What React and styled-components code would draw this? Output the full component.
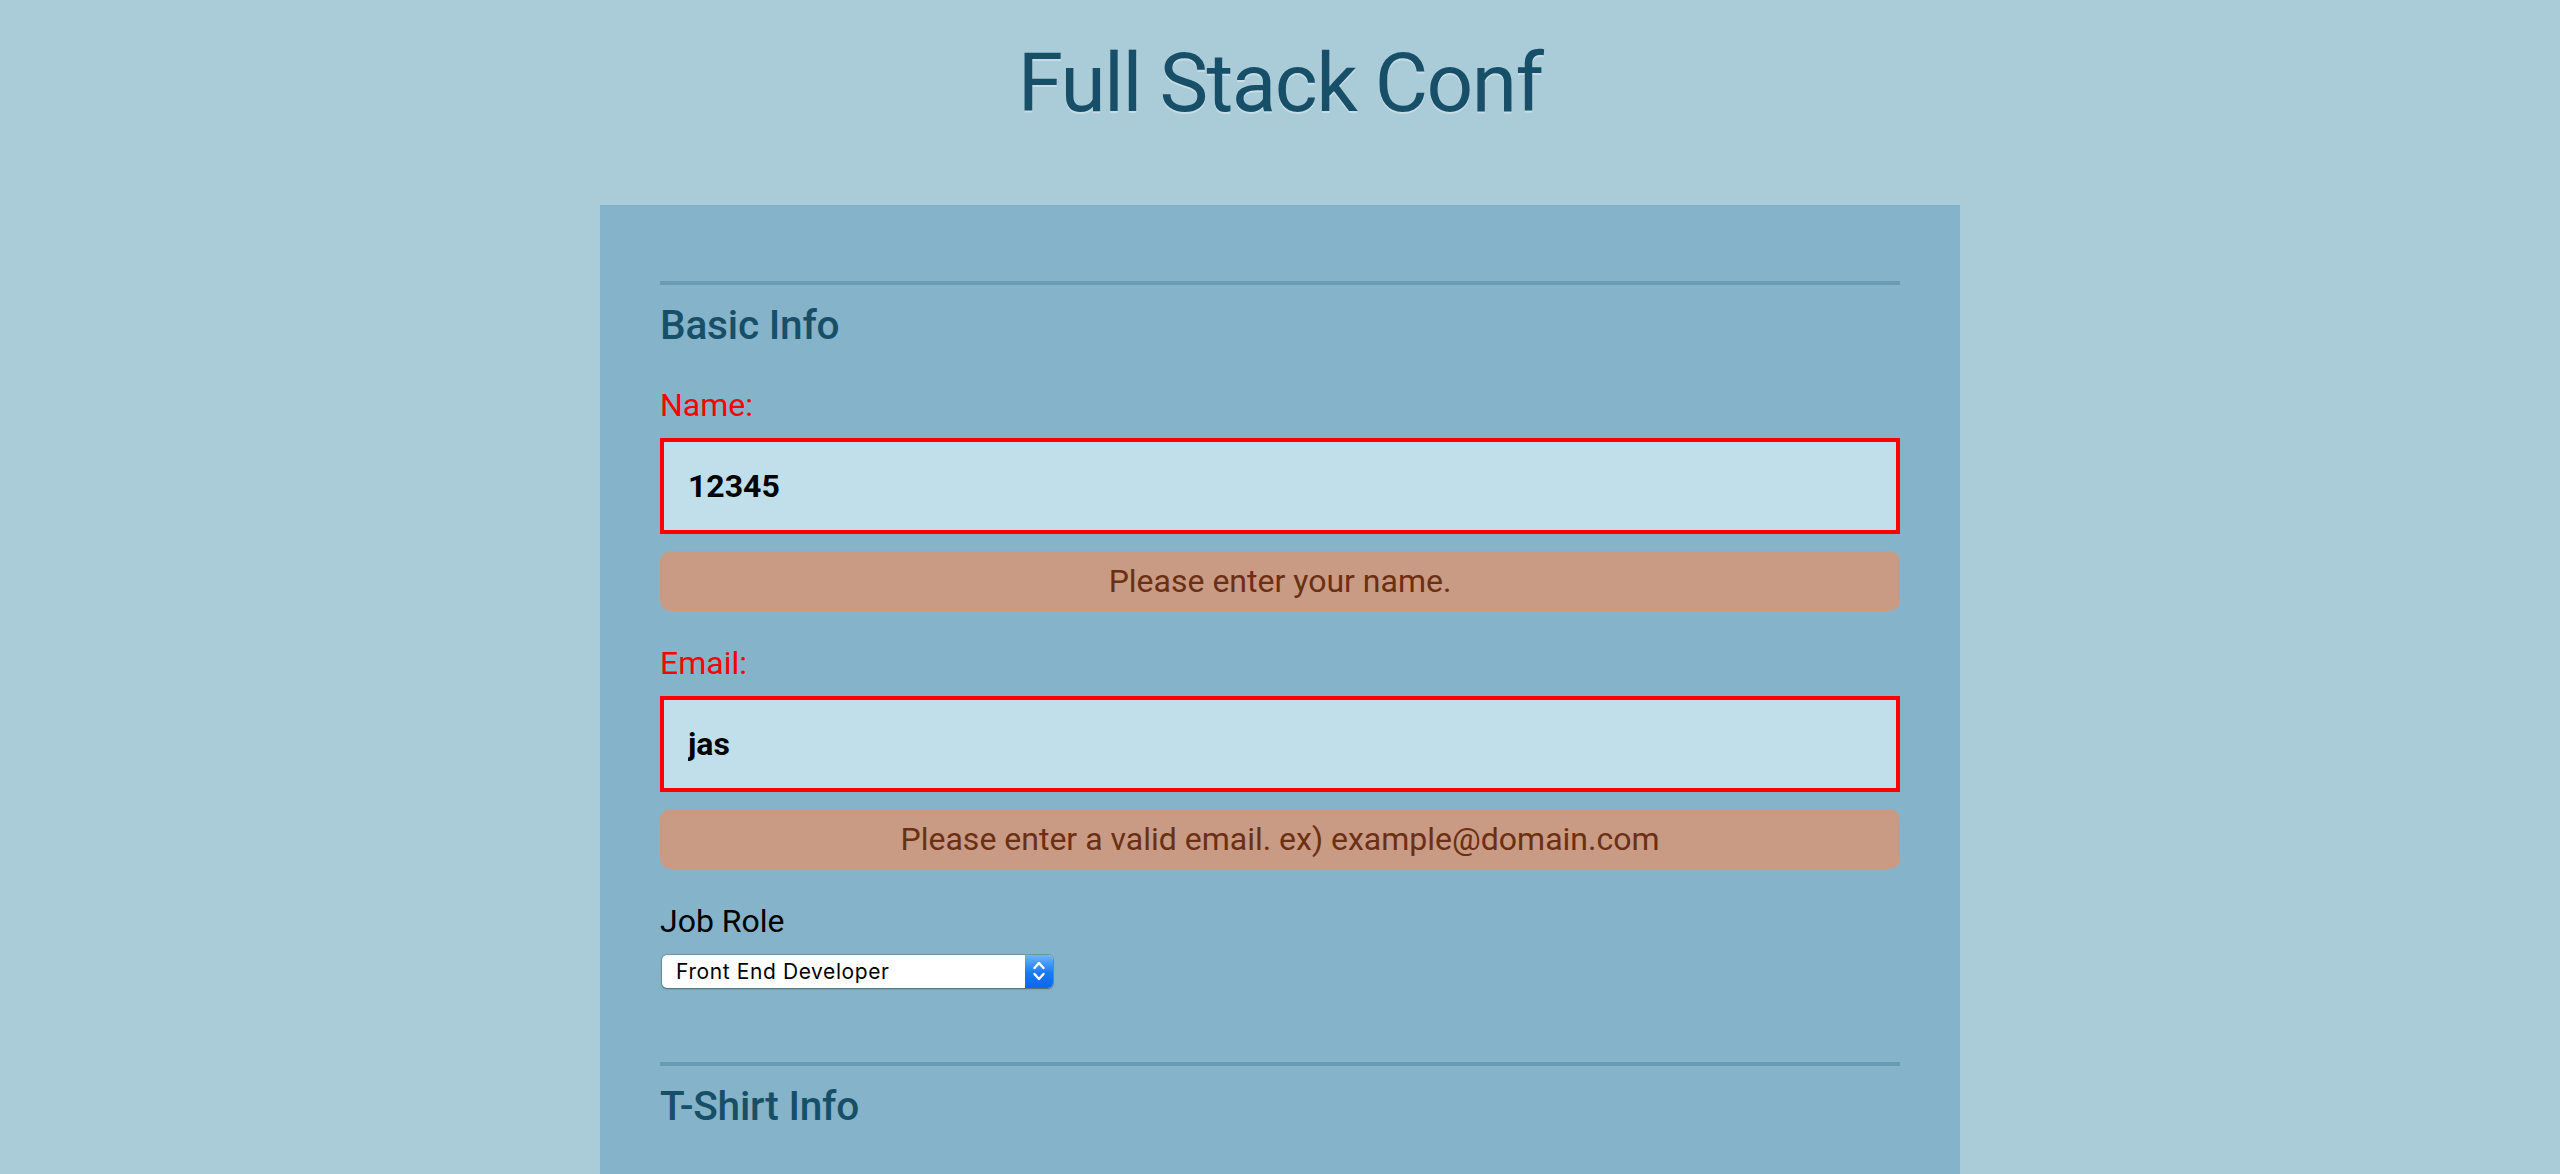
import React from 'react';
import styled, { createGlobalStyle } from 'styled-components';

const GlobalStyle = createGlobalStyle`
  html, body { margin: 0; padding: 0; overflow: hidden; }
  body {
    background: #aacbd8;
    font-family: Roboto, "Noto Sans", "Liberation Sans", sans-serif;
  }
  *, *::before, *::after { box-sizing: border-box; }
`;

const Header = styled.header`
  padding-top: 42px;
  margin-bottom: 80px;
  text-align: center;
`;

const Title = styled.h1`
  margin: 0;
  font-size: 82px;
  line-height: 83px;
  font-weight: 400;
  letter-spacing: -1.6px;
  color: #184f68;
  text-shadow: 0 2px 0 rgba(255, 255, 255, 0.35);
`;

const Form = styled.form`
  width: 1360px;
  margin: 0 auto;
  background: #85b4ca;
  padding: 76px 60px 240px;
  display: flex;
  flex-direction: column;
  gap: 74px;
`;

const Fieldset = styled.fieldset`
  border: 0;
  border-top: 4px solid #689cb4;
  margin: 0;
  padding: 20px 0 0;
  min-width: 0;
  display: flex;
  flex-direction: column;
`;

const Legend = styled.h2`
  margin: 0 0 43px;
  font-size: 40.6px;
  line-height: 1;
  font-weight: 500;
  letter-spacing: -0.2px;
  color: #184f68;
`;

const Field = styled.div`
  display: flex;
  flex-direction: column;
  align-items: flex-start;
  margin-bottom: ${p => (p.$last ? 0 : 36)}px;
`;

const Label = styled.label`
  display: block;
  font-size: 32px;
  line-height: 1;
  font-weight: 400;
  color: ${p => (p.$error ? '#ff0000' : '#000000')};
  margin-bottom: ${p => p.$gap ?? 17}px;
`;

const TextInput = styled.input`
  display: block;
  width: 100%;
  height: 96px;
  margin: 0 0 17px;
  padding: 0 24px;
  border: 4px solid ${p => (p.$error ? '#ff0000' : '#c1dfea')};
  background: #c1dfea;
  font-family: Roboto, "Noto Sans", sans-serif;
  font-size: 32px;
  font-weight: 700;
  color: #000;
  outline: none;
`;

const ErrorMsg = styled.div`
  width: 100%;
  height: 60px;
  border-radius: 10px;
  background: #c99b84;
  color: #6b2f13;
  font-size: 32px;
  line-height: 60px;
  text-align: center;
`;

const SelectWrap = styled.div`
  position: relative;
  width: 391px;
  height: 33px;
  margin-left: 2px;
`;

const NativeSelect = styled.select`
  appearance: none;
  -webkit-appearance: none;
  width: 100%;
  height: 100%;
  border: 0;
  border-radius: 5px;
  background: #ffffff;
  padding: 0 36px 0 14px;
  font-family: Inter, "Liberation Sans", sans-serif;
  font-size: 21px;
  letter-spacing: 0.6px;
  color: #000;
  box-shadow: 0 0 0 1px rgba(0, 0, 0, 0.16), 0 1px 2px rgba(0, 0, 0, 0.3);
  outline: none;
`;

const Stepper = styled.span`
  position: absolute;
  top: 0;
  right: 0;
  width: 28px;
  height: 33px;
  border-radius: 0 5px 5px 0;
  background: linear-gradient(#6db4fb, #1a78f5 55%, #0d66ee);
  display: flex;
  align-items: center;
  justify-content: center;
  pointer-events: none;
`;

const ShirtRow = styled.div`
  display: grid;
  grid-template-columns: 395px 1fr;
`;

const Chevrons = () => (
  <svg width="14" height="24" viewBox="0 0 14 24" fill="none" stroke="#fff" strokeWidth="2.4" strokeLinecap="round" strokeLinejoin="round">
    <polyline points="2.5,9 7,4 11.5,9" />
    <polyline points="2.5,15 7,20 11.5,15" />
  </svg>
);

const Select = ({ options, value }) => (
  <SelectWrap>
    <NativeSelect defaultValue={value}>
      {options.map(o => (
        <option key={o} value={o}>{o}</option>
      ))}
    </NativeSelect>
    <Stepper><Chevrons /></Stepper>
  </SelectWrap>
);

export default function App() {
  return (
    <>
      <GlobalStyle />
      <Header>
        <Title>Full Stack Conf</Title>
      </Header>
      <Form onSubmit={e => e.preventDefault()}>
        <Fieldset>
          <Legend>Basic Info</Legend>
          <Field>
            <Label htmlFor="name" $error>Name:</Label>
            <TextInput id="name" type="text" defaultValue="12345" $error />
            <ErrorMsg>Please enter your name.</ErrorMsg>
          </Field>
          <Field>
            <Label htmlFor="mail" $error>Email:</Label>
            <TextInput id="mail" type="email" defaultValue="jas" $error />
            <ErrorMsg>Please enter a valid email. ex) example@domain.com</ErrorMsg>
          </Field>
          <Field $last>
            <Label htmlFor="title" $gap={18}>Job Role</Label>
            <Select
              value="Front End Developer"
              options={['Full Stack JavaScript Developer', 'Front End Developer', 'Back End Developer', 'Designer', 'Student', 'Other']}
            />
          </Field>
        </Fieldset>
        <Fieldset>
          <Legend>T-Shirt Info</Legend>
          <ShirtRow>
            <Field $last>
              <Label htmlFor="size" $gap={18}>Size:</Label>
              <Select value="M" options={['S', 'M', 'L', 'XL']} />
            </Field>
            <Field $last>
              <Label htmlFor="design" $gap={18}>Design:</Label>
              <Select value="Select Theme" options={['Select Theme', 'Theme - JS Puns', 'Theme - I ♥ JS']} />
            </Field>
          </ShirtRow>
        </Fieldset>
      </Form>
    </>
  );
}
